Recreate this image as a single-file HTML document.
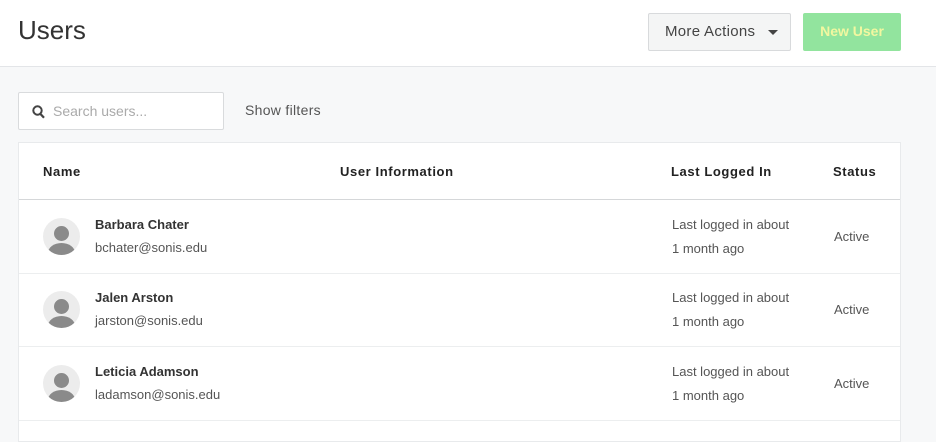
<!DOCTYPE html>
<html><head><style>
*{box-sizing:border-box;margin:0;padding:0}
body{width:936px;height:429px;overflow:hidden;background:#f7f8f9;font-family:"Liberation Sans",sans-serif;position:relative;color:#444}
.top{position:absolute;left:0;top:0;width:936px;height:67px;background:#fff;border-bottom:1px solid #e3e5e8}
.title{position:absolute;left:18px;top:15px;font-size:26px;color:#333;font-weight:normal}
.more{position:absolute;left:648px;top:13px;width:143px;height:38px;border:1px solid #d8dadc;background:#f4f5f5;border-radius:2px;font-size:15px;color:#444;line-height:36px;padding-left:16px;letter-spacing:.3px}
.more:after{content:"";position:absolute;left:119px;top:16px;border-left:5px solid transparent;border-right:5px solid transparent;border-top:5px solid #444}
.new{position:absolute;left:803px;top:13px;width:98px;height:38px;background:#92e49e;border-radius:2px;color:#f2f7a0;font-size:14px;font-weight:bold;line-height:36px;text-align:center}
.search{position:absolute;left:18px;top:92px;width:206px;height:38px;background:#fff;border:1px solid #d9dbdd;border-radius:2px}
.search span{position:absolute;left:34px;top:10px;font-size:14px;color:#aaa}
.sf{position:absolute;left:245px;top:102px;font-size:14px;color:#555;letter-spacing:.3px}
.card{position:absolute;left:18px;top:142px;width:883px;height:300px;background:#fff;border:1px solid #e8eaec}
.th{position:absolute;top:21px;font-size:13px;font-weight:bold;color:#222;letter-spacing:.6px}
.hl{position:absolute;left:0;right:0;top:56px;border-top:1px solid #d5d7d9}
.row{position:absolute;left:0;right:0;height:74px;border-bottom:1px solid #eceeef}
.av{position:absolute;left:24px;top:18px;width:37px;height:37px;border-radius:50%;background:#ececec;overflow:hidden}
.av .h{position:absolute;left:11px;top:8px;width:15px;height:15px;border-radius:50%;background:#8a8a8a}
.av .b{position:absolute;left:5px;top:25px;width:27px;height:20px;border-radius:50%;background:#8a8a8a}
.nm{position:absolute;left:76px;top:17px;font-size:13px;font-weight:bold;color:#333}
.em{position:absolute;left:76px;top:40px;font-size:13px;color:#555}
.l1{position:absolute;left:653px;top:17px;font-size:13px;color:#555}
.l2{position:absolute;left:653px;top:41px;font-size:13px;color:#555}
.st{position:absolute;left:815px;top:29px;font-size:13px;color:#555}
</style></head><body>
<div class="top">
<div class="title">Users</div>
<div class="more">More Actions</div>
<div class="new">New User</div>
</div>
<div class="search"><svg style="position:absolute;left:13px;top:12px" width="13" height="14" viewBox="0 0 13 14"><circle cx="5.5" cy="5.5" r="4.2" fill="none" stroke="#444" stroke-width="2"/><path d="M8.5 9 L12 12.8" stroke="#444" stroke-width="2.2"/></svg><span>Search users...</span></div>
<div class="sf">Show filters</div>
<div class="card">
<div class="th" style="left:24px">Name</div>
<div class="th" style="left:321px">User Information</div>
<div class="th" style="left:652px">Last Logged In</div>
<div class="th" style="left:814px">Status</div>
<div class="hl"></div>
<div class="row" style="top:57px"><div class="av"><div class="h"></div><div class="b"></div></div><div class="nm">Barbara Chater</div><div class="em">bchater@sonis.edu</div><div class="l1">Last logged in about</div><div class="l2">1 month ago</div><div class="st">Active</div></div>
<div class="row" style="top:130px"><div class="av"><div class="h"></div><div class="b"></div></div><div class="nm">Jalen Arston</div><div class="em">jarston@sonis.edu</div><div class="l1">Last logged in about</div><div class="l2">1 month ago</div><div class="st">Active</div></div>
<div class="row" style="top:204px"><div class="av"><div class="h"></div><div class="b"></div></div><div class="nm">Leticia Adamson</div><div class="em">ladamson@sonis.edu</div><div class="l1">Last logged in about</div><div class="l2">1 month ago</div><div class="st">Active</div></div>
</div>
</body></html>
